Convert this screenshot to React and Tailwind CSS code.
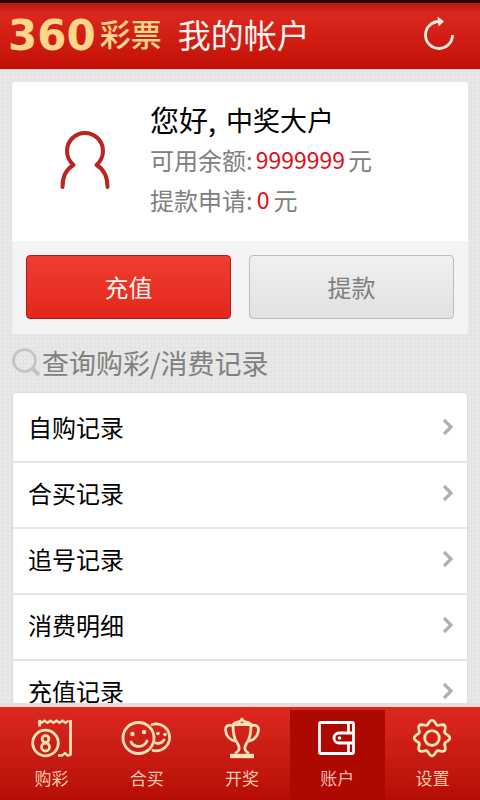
const records = ["自购记录", "合买记录", "追号记录", "消费明细", "充值记录"];

function TicketIcon() {
  return (
    <svg viewBox="0 0 42 42" className="h-[42px] w-[42px]" fill="none" stroke="currentColor" strokeWidth="2.8">
      <path d="M8.500 9.500V3" />
      <path d="M8 3.500l2.500 2.200 3-2 3 2 3-2 3 2 3-2 3 2 3-2 3 2 3-2" strokeWidth="2.400" />
      <path d="M39.500 3v35.500" />
      <path d="M39.500 38l-3 .5-2.500-2.500-3 2.500h-4" strokeWidth="2.400" />
      <circle cx="14.500" cy="26" r="12.800" />
      <circle cx="14.500" cy="22" r="3.400" />
      <circle cx="14.500" cy="30" r="4" />
    </svg>
  );
}

function FacesIcon() {
  return (
    <svg viewBox="0 0 52 42" className="h-[42px] w-[52px]" fill="none" stroke="currentColor" strokeWidth="2.8" strokeLinecap="round">
      <circle cx="17.500" cy="21" r="15.500" />
      <path d="M31 7.500a13.500 13.500 0 1 1 1 26" />
      <path d="M10 25c3 6 13 6 16-1M35 26c3 1 6 0 8-3" />
      <g fill="currentColor" stroke="none">
        <circle cx="11.500" cy="17" r="2.200" />
        <circle cx="23" cy="15" r="2.200" />
        <circle cx="37" cy="16.500" r="1.800" />
        <circle cx="44" cy="17.500" r="1.800" />
      </g>
    </svg>
  );
}

function TrophyIcon() {
  return (
    <svg viewBox="0 0 42 46" className="h-[46px] w-[42px]" fill="none" stroke="currentColor" strokeWidth="2.8" strokeLinejoin="round">
      <path d="M12 9.500h18c0 8-1 14-4 18-2 3-2.500 5-2 7 .5 2 2 3 4 4M12 9.500c0 8 1 14 4 18 2 3 2.500 5 2 7-.5 2-2 3-4 4" />
      <path d="M12 9.500c2-2 5-2.500 7-3l2-2.500 2 2.500c2 .5 5 1 7 3" />
      <path d="M12 11c-4-2-8 0-7.500 4C5 21 9 25 15 26.500M30 11c4-2 8 0 7.500 4C37 21 33 25 27 26.500" />
      <path d="M9 41h24" strokeWidth="4.400" />
    </svg>
  );
}

function WalletIcon() {
  return (
    <svg viewBox="0 0 40 36" className="h-[36px] w-[40px]" fill="none" stroke="currentColor" strokeWidth="2.800">
      <rect x="2.500" y="2.500" width="34" height="31" rx="1.500" />
      <path d="M31.500 3v9.500M31.500 23.500V33M36.500 13H22a5 5 0 0 0 0 10h14.500" />
      <circle cx="22.500" cy="18" r="1.800" fill="currentColor" stroke="none" />
    </svg>
  );
}

// eight rounded teeth around the centre
const gearPoints = Array.from({ length: 96 }, (_, i) => {
  const angle = (i / 96) * Math.PI * 2;
  const r = 15.8 + 2 * Math.cos(angle * 8);
  return `${(20 + r * Math.sin(angle)).toFixed(2)},${(21 - r * Math.cos(angle)).toFixed(2)}`;
}).join(" ");

function GearIcon() {
  return (
    <svg viewBox="0 0 40 42" className="h-[42px] w-[40px]" fill="none" stroke="currentColor" strokeWidth="2.800" strokeLinejoin="round">
      <polygon points={gearPoints} />
      <circle cx="20" cy="21" r="7.300" />
    </svg>
  );
}

const tabs = [
  { label: "购彩", icon: TicketIcon },
  { label: "合买", icon: FacesIcon },
  { label: "开奖", icon: TrophyIcon },
  { label: "账户", icon: WalletIcon, active: true },
  { label: "设置", icon: GearIcon },
];

export default function App() {
  return (
    <div className="flex h-screen flex-col bg-[#e8e8e8] font-['Noto_Sans_CJK_SC',sans-serif]">
      <header className="flex h-[70px] shrink-0 items-center border-t-3 border-b border-t-[#2a0000] border-b-[#f3cfc6] bg-linear-to-b from-[#b5170f] via-[#dc281e] via-15% to-[#c20f05] pr-6 pl-2">
        <div className="flex items-center text-[#ffd68a]">
          <span className="font-['DejaVu_Sans'] text-[42px] leading-none font-bold">360</span>
          <span className="ml-1 pb-2 text-[31px] leading-none font-medium">彩票</span>
        </div>
        <h1 className="ml-4 flex-1 pb-1 text-[33px] leading-none text-[#fff3ee]">我的帐户</h1>
        <button type="button" aria-label="刷新" className="pb-1 text-[#fff1e0]">
          <svg viewBox="0 0 34 38" className="h-[38px] w-[34px]" fill="none" stroke="currentColor" strokeWidth="2.800">
            <path d="M30.500 20A13.500 13.500 0 1 1 17 6.500" />
            <path d="M15.500 1.500l6.500 5-5.500 5z" fill="currentColor" stroke="none" />
          </svg>
        </button>
      </header>

      <main className="min-h-0 flex-1 overflow-hidden bg-[repeating-linear-gradient(0deg,#0000_0_3px,#00000005_3px_4px),repeating-linear-gradient(90deg,#0000_0_3px,#00000005_3px_4px)] px-3 pt-3">
        <section className="overflow-hidden rounded-t-sm bg-[#f4f4f4]">
          <div className="flex h-[159px] items-center bg-white pb-1">
            <div className="flex w-[138px] shrink-0 justify-center pl-2">
              <svg viewBox="0 0 52 60" className="h-[60px] w-[52px]" fill="none" stroke="#b9251f" strokeWidth="4" strokeLinecap="round" strokeLinejoin="round">
                <path d="M3.500 57c0-11 4-18 11-22C10 31 8 26 8 21a18 18 0 0 1 36 0c0 5-2 10-6.500 14 7 4 11 11 11 22" />
              </svg>
            </div>
            <div className="text-2xl text-[#808080]">
              <p className="flex h-10 items-center text-[27px] text-black">
                <span className="text-[29px]">您好,</span>
                <span className="ml-2.5">中奖大户</span>
              </p>
              <p className="flex h-10 items-center">
                可用余额:<span className="mx-[3px] text-[23px] text-[#e00d18]">9999999</span>元
              </p>
              <p className="flex h-10 items-center">
                提款申请:<span className="mx-1 text-[23px] text-[#e00d18]">0</span>元
              </p>
            </div>
          </div>
          <div className="grid grid-cols-2 gap-[18px] px-[14px] pt-[14px] pb-[15px]">
            <button type="button" className="h-[64px] rounded-sm border border-[#a82017] bg-linear-to-b from-[#f03c31] to-[#e2271c] text-2xl text-[#fff3e8]">
              充值
            </button>
            <button type="button" className="h-[64px] rounded-sm border border-[#bcbcbc] bg-linear-to-b from-[#f0f0f0] to-[#e1e1e1] text-2xl text-[#808080]">
              提款
            </button>
          </div>
        </section>

        <h2 className="flex h-[58px] items-center text-[27px] text-[#808080]">
          <svg viewBox="0 0 30 30" className="h-[30px] w-[30px]" fill="none" stroke="#c3c3c3" strokeWidth="2.600">
            <circle cx="12.500" cy="12.500" r="11" />
            <path d="M20.500 20.500l6.500 6.500" strokeWidth="4" />
          </svg>
          查询购彩/消费记录
        </h2>

        <ul className="rounded-t-sm border border-[#dcdcdc] bg-white pt-1">
          {records.map((name) => (
            <li key={name} className="border-b-2 border-[#e6e6e6]">
              <a href="#" className="flex h-16 items-center justify-between pr-[13px] pb-1 pl-[15px] text-2xl text-black">
                {name}
                <svg viewBox="0 0 12 18" className="h-[18px] w-3" fill="none" stroke="#b0b0b0" strokeWidth="3.200">
                  <path d="M2 2l7 7-7 7" />
                </svg>
              </a>
            </li>
          ))}
        </ul>
      </main>

      <nav className="grid h-[97px] shrink-0 grid-cols-5 border-t-4 border-[#f0d9d9] bg-linear-to-b from-[#dd281f] to-[#b50d05] pl-1">
        {tabs.map(({ label, icon: Icon, active }) => (
          <a
            key={label}
            href="#"
            className={`flex flex-col items-center ${
              active ? "mt-[3px] bg-[#ae0900] pt-[5px] text-white" : "pt-2 text-[#ffe2b8]"
            }`}
          >
            <span className="flex h-[46px] items-center">
              <Icon />
            </span>
            <span className={`mt-[5px] text-[17px] leading-6 ${active ? "text-[#f8b8b0]" : "text-[#ffc9ae]"}`}>{label}</span>
          </a>
        ))}
      </nav>
    </div>
  );
}
